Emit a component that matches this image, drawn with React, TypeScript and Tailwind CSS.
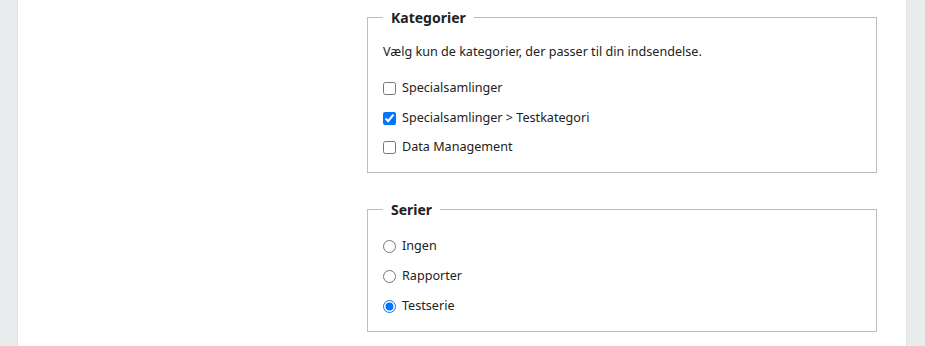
import React from "react";

const font = { fontFamily: '"Noto Sans", sans-serif' };

function Fieldset({ legend, children }: { legend: string; children: React.ReactNode }) {
  return (
    <fieldset className="border border-[#bdbdbd] ml-[349px] w-[510px] px-[15px] pb-[15px]">
      <legend className="px-[8px] text-[14px] font-bold text-[#222]">{legend}</legend>
      {children}
    </fieldset>
  );
}

export default function App() {
  const [cats, setCats] = React.useState([false, true, false]);
  const [series, setSeries] = React.useState(2);
  const catLabels = ["Specialsamlinger", "Specialsamlinger > Testkategori", "Data Management"];
  const seriesLabels = ["Ingen", "Rapporter", "Testserie"];
  return (
    <div className="flex h-[346px] w-[925px] bg-[#e9ecec] overflow-hidden" style={font}>
      <div className="w-[18px] border-r border-[#dfe3e3]" />
      <div className="w-[888px] bg-white pt-[7px] text-[12.6px] text-[#222]">
        <Fieldset legend="Kategorier">
          <p className="mt-[15px] mb-[18px]">Vælg kun de kategorier, der passer til din indsendelse.</p>
          <div className="flex flex-col gap-[11.5px]">
            {catLabels.map((l, i) => (
              <label key={l} className="flex items-center gap-[6px] h-[18px]">
                <input
                  type="checkbox"
                  checked={cats[i]}
                  onChange={() => setCats(cats.map((c, j) => (j === i ? !c : c)))}
                  className="m-0 w-[13px] h-[13px]"
                />
                <span>{l}</span>
              </label>
            ))}
          </div>
        </Fieldset>
        <div className="h-[26px]" />
        <Fieldset legend="Serier">
          <div className="flex flex-col gap-[11px] mt-[17px]">
            {seriesLabels.map((l, i) => (
              <label key={l} className="flex items-center gap-[6px] h-[19px]">
                <input
                  type="radio"
                  name="serie"
                  checked={series === i}
                  onChange={() => setSeries(i)}
                  className="m-0 w-[13px] h-[13px]"
                />
                <span>{l}</span>
              </label>
            ))}
          </div>
        </Fieldset>
      </div>
      <div className="flex-1 border-l border-[#dfe3e3]" />
    </div>
  );
}
